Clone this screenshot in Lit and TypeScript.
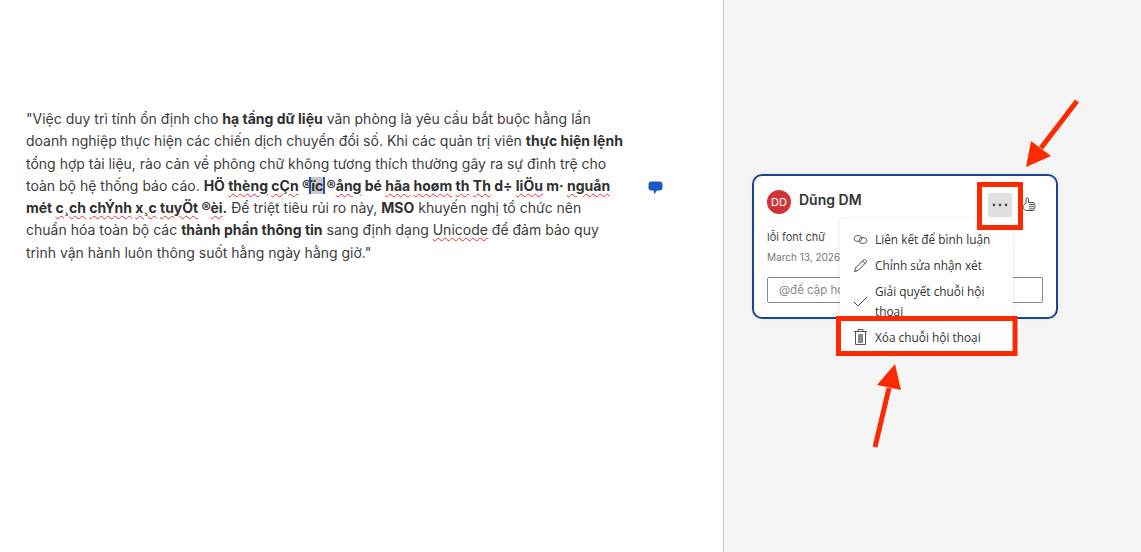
import {LitElement, css, html} from 'lit';
import {customElement} from 'lit/decorators.js';

@customElement('app-root')
export class AppRoot extends LitElement {
  static get styles() {
    return css`
      :host {
        display: block;
        width: 1141px;
        height: 552px;
        overflow: hidden;
        position: relative;
        font-family: Inter, 'Liberation Sans', sans-serif;
      }
      .page {
        display: flex;
        height: 552px;
      }
      .doc {
        width: 723px;
        box-sizing: border-box;
        background: #fff;
        padding: 108px 0 0 26px;
        position: relative;
      }
      .doc p {
        margin: 0;
        font-size: 14px;
        line-height: 22.3px;
        color: #3d3d3d;
        white-space: nowrap;
      }
      .doc b {
        font-weight: 700;
        color: #303030;
      }
      .err {
        text-decoration: underline wavy #e5322d 1px;
        text-underline-offset: 2px;
      }
      .sel {
        background: #c9c9c9;
        border-left: 2px solid #1f56b0;
        border-right: 2px solid #1f56b0;
        margin: 0 -2px;
      }
      .marker {
        position: absolute;
        left: 648px;
        top: 181px;
      }
      .side {
        flex: 1;
        background: #f5f5f5;
        border-left: 1px solid #c8c8c8;
        padding: 174px 0 0 28px;
        position: relative;
      }
      .card {
        width: 306px;
        height: 145px;
        box-sizing: border-box;
        background: #fff;
        border: 2px solid #1a4590;
        border-radius: 10px;
        padding: 13px 13px 0;
        box-shadow: 0 0 6px rgba(0, 0, 0, 0.05);
      }
      .head {
        display: flex;
        align-items: center;
        height: 26px;
      }
      .avatar {
        width: 24px;
        height: 24px;
        border-radius: 50%;
        background: #d13438;
        color: #fff;
        font-size: 11px;
        display: flex;
        align-items: center;
        justify-content: center;
        margin-right: 8px;
      }
      .name {
        flex: 1;
        font-size: 14px;
        font-weight: 600;
        color: #323232;
        margin-top: -6px;
      }
      .more {
        width: 24px;
        height: 24px;
        border-radius: 2px;
        background: #e0e0e0;
        display: flex;
        align-items: center;
        justify-content: center;
        margin: 6px 10px 0 0;
      }
      .like {
        margin: 6px 7px 0 0;
      }
      .comment {
        margin-top: 14px;
        font-size: 11px;
        color: #4a4a4a;
        line-height: 16px;
      }
      .date {
        margin-top: 5px;
        font-size: 10px;
        color: #767676;
        line-height: 14px;
      }
      .reply {
        margin-top: 13px;
        height: 26px;
        box-sizing: border-box;
        border: 1px solid #8a8a8a;
        border-radius: 2px;
        padding-left: 11px;
        font-size: 11.5px;
        line-height: 24px;
        color: #8a8a8a;
      }
      .menu {
        position: absolute;
        left: 116px;
        top: 219px;
        width: 173px;
        height: 132px;
        box-sizing: border-box;
        background: #fff;
        box-shadow: 0 1px 5px rgba(0, 0, 0, 0.1);
        padding-top: 7px;
      }
      .item {
        display: flex;
        align-items: center;
        padding-left: 13px;
        font-family: 'Open Sans', Inter, sans-serif;
        font-size: 11.85px;
        color: #323232;
        height: 26px;
        gap: 7px;
      }
      .item svg {
        flex: none;
      }
      .item span {
        width: 125px;
      }
      .item.tall {
        height: 40px;
        margin-top: 3px;
        line-height: 20px;
      }
      .item.last {
        margin-top: 3px;
      }
      .overlay {
        position: absolute;
        left: 0;
        top: 0;
        pointer-events: none;
      }
    `;
  }

  render() {
    return html`
      <div class="page">
        <div class="doc">
          <p>"Việc duy trì tính ổn định cho <b>hạ tầng dữ liệu</b> văn phòng là yêu cầu bắt buộc hằng lần<br />doanh nghiệp thực hiện các chiến dịch chuyển đổi số. Khi các quản trị viên <b>thực hiện lệnh</b><br />tổng hợp tài liệu, rào cản về phông chữ không tương thích thường gây ra sự đình trệ cho<br />toàn bộ hệ thống báo cáo. <b>HÖ <span class="err">thèng</span> <span class="err">cÇn</span> ®<span class="sel">ïc</span> ®<span class="err">ång</span> bé <span class="err">hãa</span> <span class="err">hoøm</span> <span class="err">th</span> <span class="err">Th</span> d÷ <span class="err">liÖu</span> m· <span class="err">nguån</span><br />mét <span class="err">c¸ch</span> <span class="err">chÝnh</span> <span class="err">x¸c</span> <span class="err">tuyÖt</span> ®<span class="err">èi</span>.</b> Để triệt tiêu rủi ro này, <b>MSO</b> khuyến nghị tổ chức nên<br />chuẩn hóa toàn bộ các <b>thành phần thông tin</b> sang định dạng <span class="err">Unicode</span> để đảm bảo quy<br />trình vận hành luôn thông suốt hằng ngày hằng giờ."</p>
          <svg class="marker" width="15" height="14" viewBox="0 0 15 14">
            <path d="M3.5 0.5h8a3 3 0 0 1 3 3v3a3 3 0 0 1-3 3H9l-2.500 3.500-1-3.500h-2a3 3 0 0 1-3-3v-3a3 3 0 0 1 3-3z" fill="#1a5bc4" />
          </svg>
        </div>
        <div class="side">
          <div class="card">
            <div class="head">
              <div class="avatar">DD</div>
              <div class="name">Dũng DM</div>
              <div class="more">
                <svg width="16" height="4" viewBox="0 0 16 4" fill="#555">
                  <circle cx="2" cy="2" r="1.4" /><circle cx="8" cy="2" r="1.4" /><circle cx="14" cy="2" r="1.4" />
                </svg>
              </div>
              <svg class="like" width="14" height="16" viewBox="0 0 14 16" fill="none" stroke="#555" stroke-width="1">
                <path d="M1.500 8.500L4 6V2c0-1.500 2.500-1.500 2.500 0v3.500H11c1.500 0 2 1 1.500 2 .8.600.8 1.700.2 2.200.5.800.3 1.800-.4 2.100.3 1-.3 1.700-1.300 1.700H5c-1.500 0-2.500-.5-3-1.500C1 12 1 10 1.500 8.500z" />
                <path d="M7 7.500h5M7 9.700h5.500M7 11.900h5" />
              </svg>
            </div>
            <div class="comment">lỗi font chữ</div>
            <div class="date">March 13, 2026</div>
            <div class="reply">@đề cập ho</div>
          </div>
          <div class="menu">
            <div class="item">
              <svg width="15" height="15" viewBox="0 0 15 15" fill="none" stroke="#666" stroke-width="1">
                <ellipse cx="5" cy="6.500" rx="4" ry="3" />
                <ellipse cx="10" cy="8.500" rx="4" ry="3" />
              </svg>
              <span>Liên kết để bình luận</span>
            </div>
            <div class="item">
              <svg width="15" height="15" viewBox="0 0 15 15" fill="none" stroke="#444" stroke-width="1">
                <path d="M1.500 13.500l1-3.500L10.500 2a1.400 1.400 0 0 1 2 0l.5.500a1.400 1.400 0 0 1 0 2L5 12.500z" />
                <path d="M9.500 3l2.500 2.500" />
              </svg>
              <span>Chỉnh sửa nhận xét</span>
            </div>
            <div class="item tall">
              <svg width="15" height="15" viewBox="0 0 15 15" fill="none" stroke="#444" stroke-width="1">
                <path d="M1 8l4 4 9-9" />
              </svg>
              <span>Giải quyết chuỗi hội thoại</span>
            </div>
            <div class="item last">
              <svg width="15" height="18" viewBox="0 0 15 18" fill="none" stroke="#555" stroke-width="1">
                <path d="M1 3.500h13M5 3.500V1.500h5v2M2.500 3.500V16.500h10V3.500" />
                <rect x="5" y="6" width="5" height="9" fill="#888" stroke="none" />
              </svg>
              <span>Xóa chuỗi hội thoại</span>
            </div>
          </div>
        </div>
      </div>
      <svg class="overlay" width="1141" height="552" viewBox="0 0 1141 552" fill="none">
        <rect x="979.500" y="184.500" width="41" height="43" stroke="#fb2a00" stroke-width="5" />
        <rect x="838.500" y="318.500" width="176.500" height="35" stroke="#fb2a00" stroke-width="5" />
        <path d="M1077 101L1041 148" stroke="#fb2a00" stroke-width="5" />
        <path d="M1026 167L1031 141L1051 156z" fill="#fb2a00" />
        <path d="M875 447L889 388" stroke="#fb2a00" stroke-width="5" />
        <path d="M895 364L877 385L901 390z" fill="#fb2a00" />
      </svg>
    `;
  }
}
